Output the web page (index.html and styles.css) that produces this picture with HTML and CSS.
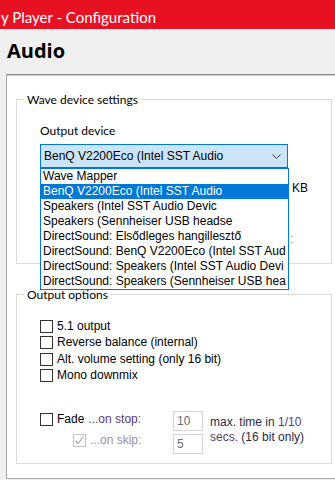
FILE: index.html
```html
<!DOCTYPE html>
<html>
<head>
<meta charset="utf-8">
<link rel="stylesheet" href="styles.css">
</head>
<body>
<div class="titlebar">y Player - Configuration</div>
<div class="heading">Audio</div>
<div class="panel">
  <fieldset class="group group-wave">
    <legend>Wave device settings</legend>
    <div class="group-body">
      <div class="field-label">Output device</div>
      <div class="combo">
        <div class="combo-box">
          <span class="combo-text">BenQ V2200Eco (Intel SST Audio</span>
          <svg class="chevron" width="9" height="5" viewBox="0 0 9 5"><polyline points="0.5,0.5 4.5,4.5 8.5,0.5" fill="none" stroke="#333" stroke-width="1"/></svg>
        </div>
        <ul class="combo-list">
          <li>Wave Mapper</li>
          <li class="selected">BenQ V2200Eco (Intel SST Audio</li>
          <li>Speakers (Intel SST Audio Devic</li>
          <li>Speakers (Sennheiser USB headse</li>
          <li>DirectSound: Elsődleges hangillesztő</li>
          <li>DirectSound: BenQ V2200Eco (Intel SST Aud</li>
          <li>DirectSound: Speakers (Intel SST Audio Devi</li>
          <li>DirectSound: Speakers (Sennheiser USB hea</li>
        </ul>
      </div>
      <div class="hidden-row unit">KB</div>
      <div class="hidden-row colon">:</div>
    </div>
  </fieldset>

  <fieldset class="group group-output">
    <legend>Output options</legend>
    <div class="group-body">
      <div class="checks">
        <label class="check"><span class="box"></span>5.1 output</label>
        <label class="check"><span class="box"></span>Reverse balance (internal)</label>
        <label class="check"><span class="box"></span>Alt. volume setting (only 16 bit)</label>
        <label class="check"><span class="box"></span>Mono downmix</label>
      </div>
      <div class="fade">
        <div class="fade-labels">
          <label class="check"><span class="box"></span>Fade <span class="stop">...on stop:</span></label>
          <label class="check sub"><span class="box disabled"><svg width="11" height="11" viewBox="0 0 11 11"><polyline points="1.5,5.5 4,8.5 9.5,1.5" fill="none" stroke="#a8a8a8" stroke-width="1.2"/></svg></span><span class="skip">...on skip:</span></label>
        </div>
        <div class="fade-inputs">
          <span class="num">10</span>
          <span class="num">5</span>
        </div>
        <div class="fade-note"><span class="dk">max. time in</span> <span class="pu">1/10</span><br><span class="pu">secs.</span> <span class="dk">(16 bit only)</span></div>
      </div>
    </div>
  </fieldset>
</div>
</body>
</html>
```

FILE: styles.css
```css
html, body {
  margin: 0;
  padding: 0;
}
body {
  width: 335px;
  height: 480px;
  overflow: hidden;
  background: #f0f0f0;
  font-family: "Liberation Sans", Arial, sans-serif;
  font-size: 12px;
  color: #000;
}
.titlebar {
  height: 29px;
  line-height: 35px;
  background: #e81123;
  color: #fff;
  font-family: "Lato", sans-serif;
  font-size: 15px;
  white-space: nowrap;
  padding-left: 1px;
  overflow: hidden;
}
.heading {
  height: 45px;
  box-sizing: border-box;
  padding: 9px 0 0 7px;
  font-family: "Open Sans", sans-serif;
  font-size: 20px;
  font-weight: bold;
  line-height: 26px;
}
.panel {
  margin-left: 6px;
  height: 405px;
  box-sizing: border-box;
  background: #fff;
  border-top: 1px solid #8e8e8e;
  border-left: 1px solid #a8a8a8;
  border-bottom: 1px solid #a8a8a8;
  box-shadow: inset 0 1px 0 #cfcfcf;
  padding: 17px 3px 0 9px;
  overflow: hidden;
}
.group {
  margin: 0;
  border: 1px solid #dcdcdc;
  padding: 0 0 0 7px;
  min-width: 0;
}
.group legend {
  padding: 0 3px;
  line-height: 15px;
  font-family: "Lato", sans-serif;
  color: #000;
}
.group-body {
  padding-left: 16px;
}
.group-wave .group-body {
  padding-top: 16px;
  padding-bottom: 16px;
}
.field-label {
  line-height: 15px;
  font-family: "Lato", sans-serif;
}
.combo {
  position: relative;
  margin-top: 6px;
  width: 248px;
}
.combo-box {
  height: 24px;
  box-sizing: border-box;
  border: 1px solid #0078d7;
  background: #cce4f7;
  display: flex;
  align-items: center;
  padding: 0 6px 0 3px;
}
.combo-text {
  flex: 1;
  white-space: nowrap;
  overflow: hidden;
}
.chevron {
  display: block;
}
.combo-list {
  position: absolute;
  top: 100%;
  left: 0;
  width: 249px;
  box-sizing: border-box;
  margin: 0;
  padding: 0;
  list-style: none;
  background: #fff;
  border: 1px solid #0078d7;
  z-index: 2;
}
.combo-list li {
  height: 15px;
  line-height: 15px;
  padding-left: 2px;
  white-space: nowrap;
  overflow: hidden;
}
.combo-list li.selected {
  background: #0078d7;
  color: #fff;
}
.hidden-row {
  line-height: 15px;
  padding-left: 252px;
}
.unit {
  margin-top: 13px;
}
.colon {
  margin-top: 36px;
  padding-left: 250px;
  color: #9a9a9a;
}
.group-output {
  margin-top: 23px;
}
.group-output .group-body {
  padding-top: 16px;
  padding-bottom: 9px;
}
.checks {
  display: flex;
  flex-direction: column;
}
.check {
  display: flex;
  align-items: center;
  height: 16.5px;
  line-height: 15px;
  white-space: nowrap;
}
.box {
  width: 13px;
  height: 13px;
  box-sizing: border-box;
  border: 1px solid #333;
  background: #fff;
  margin-right: 4px;
  flex: none;
  display: flex;
  align-items: center;
  justify-content: center;
}
.box.disabled {
  border-color: #c4c4c4;
}
.fade {
  margin-top: 27px;
  display: flex;
  align-items: flex-start;
}
.fade-labels {
  width: 133px;
  display: flex;
  flex-direction: column;
  gap: 6px;
  padding-top: 1px;
}
.fade-labels .check {
  height: 15px;
}
.stop {
  margin-left: 4px;
  color: #5b3a78;
}
.sub {
  padding-left: 33px;
}
.skip {
  color: #9a8fa6;
}
.fade-inputs {
  display: flex;
  flex-direction: column;
  gap: 3px;
}
.num {
  width: 30px;
  height: 20px;
  box-sizing: border-box;
  border: 1px solid #d4d4d4;
  color: #6d6d6d;
  line-height: 18px;
  padding-left: 3px;
}
.fade-note {
  margin-left: 7px;
  padding-top: 4px;
  line-height: 15px;
  white-space: nowrap;
}
.dk {
  color: #2b2b45;
}
.pu {
  color: #5b3a78;
}
```
